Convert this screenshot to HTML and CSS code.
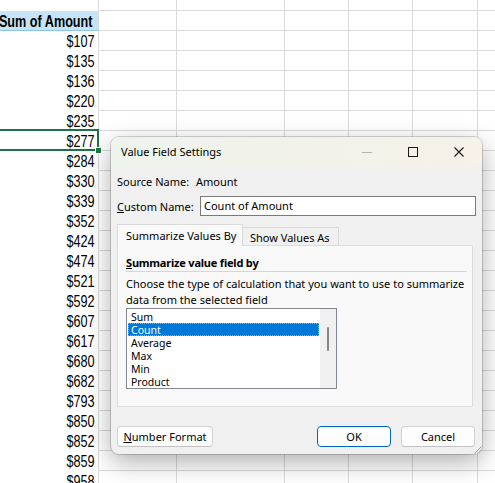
FILE: index.html
```html
<!DOCTYPE html>
<html>
<head>
<meta charset="utf-8">
<link rel="stylesheet" href="styles.css">
</head>
<body>
<div class="sheet">
  <div class="a top"></div><div></div><div></div><div></div><div></div><div></div><div></div>
  <div class="a hdr"><span>Sum of Amount</span></div><div></div><div></div><div></div><div></div><div></div><div></div>
  <div class="a"><span>$107</span></div><div></div><div></div><div></div><div></div><div></div><div></div>
  <div class="a"><span>$135</span></div><div></div><div></div><div></div><div></div><div></div><div></div>
  <div class="a"><span>$136</span></div><div></div><div></div><div></div><div></div><div></div><div></div>
  <div class="a"><span>$220</span></div><div></div><div></div><div></div><div></div><div></div><div></div>
  <div class="a"><span>$235</span></div><div></div><div></div><div></div><div></div><div></div><div></div>
  <div class="a sel"><span>$277</span></div><div></div><div></div><div></div><div></div><div></div><div></div>
  <div class="a"><span>$284</span></div><div></div><div></div><div></div><div></div><div></div><div></div>
  <div class="a"><span>$330</span></div><div></div><div></div><div></div><div></div><div></div><div></div>
  <div class="a"><span>$339</span></div><div></div><div></div><div></div><div></div><div></div><div></div>
  <div class="a"><span>$352</span></div><div></div><div></div><div></div><div></div><div></div><div></div>
  <div class="a"><span>$424</span></div><div></div><div></div><div></div><div></div><div></div><div></div>
  <div class="a"><span>$474</span></div><div></div><div></div><div></div><div></div><div></div><div></div>
  <div class="a"><span>$521</span></div><div></div><div></div><div></div><div></div><div></div><div></div>
  <div class="a"><span>$592</span></div><div></div><div></div><div></div><div></div><div></div><div></div>
  <div class="a"><span>$607</span></div><div></div><div></div><div></div><div></div><div></div><div></div>
  <div class="a"><span>$617</span></div><div></div><div></div><div></div><div></div><div></div><div></div>
  <div class="a"><span>$680</span></div><div></div><div></div><div></div><div></div><div></div><div></div>
  <div class="a"><span>$682</span></div><div></div><div></div><div></div><div></div><div></div><div></div>
  <div class="a"><span>$793</span></div><div></div><div></div><div></div><div></div><div></div><div></div>
  <div class="a"><span>$850</span></div><div></div><div></div><div></div><div></div><div></div><div></div>
  <div class="a"><span>$852</span></div><div></div><div></div><div></div><div></div><div></div><div></div>
  <div class="a"><span>$859</span></div><div></div><div></div><div></div><div></div><div></div><div></div>
  <div class="a"><span>$958</span></div><div></div><div></div><div></div><div></div><div></div><div></div>
</div>

<div class="dialog">
  <div class="titlebar">
    <span class="title">Value Field Settings</span>
    <div class="ctrls">
      <span class="ctl"><svg width="12" height="12" viewBox="0 0 12 12"><path d="M1 6.5h10" stroke="#b4b4b4" stroke-width="1"/></svg></span>
      <span class="ctl"><svg width="12" height="12" viewBox="0 0 12 12"><rect x="1.5" y="1.5" width="9" height="9" fill="none" stroke="#1a1a1a" stroke-width="1"/></svg></span>
      <span class="ctl"><svg width="12" height="12" viewBox="0 0 12 12"><path d="M1.5 1.5l9 9M10.5 1.5l-9 9" stroke="#1a1a1a" stroke-width="1.1"/></svg></span>
    </div>
  </div>
  <div class="dbody">
    <div class="row src"><span class="lbl">Source Name:</span><span>Amount</span></div>
    <div class="row cust"><span class="lbl2"><u>C</u>ustom Name:</span><div class="input">Count of Amount</div></div>
    <div class="tabs">
      <div class="tab active">Summarize Values By</div>
      <div class="tab">Show Values As</div>
    </div>
    <div class="panel">
      <div class="heading"><u>S</u>ummarize value field by</div>
      <p class="desc">Choose the type of calculation that you want to use to summarize<br>data from the selected field</p>
      <div class="listbox">
        <ul class="items">
          <li>Sum</li>
          <li class="chosen">Count</li>
          <li>Average</li>
          <li>Max</li>
          <li>Min</li>
          <li>Product</li>
        </ul>
        <div class="scroll"><div class="thumb"></div></div>
      </div>
    </div>
    <div class="buttons">
      <button class="btn nf"><u>N</u>umber Format</button>
      <span class="spacer"></span>
      <button class="btn ok">OK</button>
      <button class="btn cancel">Cancel</button>
    </div>
  </div>
  <svg class="grip" width="11" height="11" viewBox="0 0 11 11"><path d="M10.5 3.5l-7 7M10.5 7l-3.5 3.5" stroke="#9a9a9a" stroke-width="1"/></svg>
</div>
</body>
</html>
```

FILE: styles.css
```css
html, body {
  margin: 0;
  padding: 0;
  width: 495px;
  height: 483px;
  overflow: hidden;
  background: #ffffff;
}

.sheet {
  display: grid;
  grid-template-columns: 99px 78px 108px 64px 64px 65px 60px;
  grid-template-rows: 11px repeat(24, 20px);
  font-family: "Liberation Sans", Arial, sans-serif;
  font-size: 16px;
  color: #000;
}

.sheet > div {
  box-sizing: border-box;
  border-right: 1px solid #dadada;
  border-bottom: 1px solid #dadada;
}

.sheet > .a {
  border-bottom-color: #ffffff;
  display: flex;
  justify-content: flex-end;
  padding-right: 3px;
  line-height: 21px;
  white-space: nowrap;
  position: relative;
}

.sheet > .a > span {
  display: inline-block;
  flex: none;
  transform: scaleX(0.79);
  transform-origin: 100% 50%;
}

.sheet > .a.top {
  border-bottom-color: transparent;
}

.sheet > .a.hdr {
  background: #c6e4f8;
  border-bottom-color: #8fc4ea;
  font-weight: bold;
  padding-right: 6px;
}

.sheet > .a.sel::after {
  content: "";
  position: absolute;
  left: -3px;
  top: -2px;
  right: -1px;
  bottom: -1px;
  border: 2px solid #1e7145;
}

.sheet > .a.sel::before {
  content: "";
  position: absolute;
  left: 95px;
  top: 16px;
  width: 7px;
  height: 7px;
  box-sizing: border-box;
  background: #1e7145;
  border: 1px solid #ffffff;
  z-index: 2;
}

/* Dialog */
.dialog {
  position: absolute;
  left: 111px;
  top: 137px;
  width: 371px;
  height: 317px;
  border-radius: 8px;
  background: #f0f0f0;
  box-shadow: 0 0 0 1px rgba(0,0,0,0.16), 0 8px 26px rgba(0,0,0,0.32);
  font-family: "Noto Sans", "Liberation Sans", sans-serif;
  font-size: 11px;
  color: #000;
  white-space: nowrap;
  overflow: hidden;
}

.titlebar {
  height: 30px;
  display: flex;
  align-items: center;
  background: linear-gradient(90deg, #edf4ec 0%, #f2f2ea 50%, #f7f1e8 100%);
  padding-left: 10px;
  font-size: 11px;
}

.title {
  flex: 1;
  line-height: 16px;
}

.ctrls {
  display: flex;
  height: 30px;
}

.ctl {
  width: 46px;
  height: 30px;
  display: flex;
  align-items: center;
  justify-content: center;
}

.dbody {
  display: flex;
  flex-direction: column;
  padding: 7px 7px 0 6px;
}

.row {
  display: flex;
  align-items: center;
}

.src {
  line-height: 16px;
}

.lbl {
  width: 79px;
}

.cust {
  margin-top: 6px;
  height: 20px;
}

.lbl2 {
  width: 83px;
}

.input {
  flex: 1;
  height: 20px;
  box-sizing: border-box;
  border: 1px solid #7a7a7a;
  background: #ffffff;
  padding-left: 3px;
  line-height: 17px;
  margin-right: -1px;
}

.tabs {
  display: flex;
  align-items: flex-end;
  margin-top: 8px;
  height: 21px;
  position: relative;
  z-index: 1;
}

.tab {
  box-sizing: border-box;
  border: 1px solid #d9d9d9;
  border-bottom: none;
  background: #f0f0f0;
  height: 18px;
  padding: 0 7px;
  line-height: 19px;
}

.tab.active {
  background: #f9f9f9;
  height: 22px;
  margin-bottom: -1px;
  padding: 0 8px;
  line-height: 22px;
  width: 126px;
}

.tab + .tab {
  border-left: none;
  width: 96px;
}

.panel {
  box-sizing: border-box;
  height: 162px;
  border: 1px solid #dcdcdc;
  background: #f9f9f9;
  padding: 9px 5px 0 8px;
  margin-right: 2px;
}

.heading {
  font-weight: bold;
  line-height: 16px;
  letter-spacing: -0.2px;
  border-bottom: 1px solid #d6d6d6;
}

.desc {
  margin: 4px 0 0 0;
  line-height: 16px;
}

.listbox {
  width: 211px;
  height: 81px;
  box-sizing: border-box;
  border: 1px solid #828790;
  background: #ffffff;
  display: flex;
}

.items {
  list-style: none;
  margin: 0;
  padding: 1px 0 0 1px;
  flex: 1;
}

.items li {
  height: 13px;
  line-height: 14px;
  padding-left: 3px;
  font-size: 10.5px;
}

.items li.chosen {
  background: #0078d7;
  color: #ffffff;
  outline: 1px dotted #f59a36;
  outline-offset: -1px;
  margin-right: 1px;
}

.scroll {
  width: 16px;
  background: #f0f0f0;
  position: relative;
}

.thumb {
  position: absolute;
  left: 7px;
  top: 18px;
  width: 2px;
  height: 24px;
  border-radius: 1px;
  background: #858585;
}

.buttons {
  display: flex;
  margin-top: 19px;
  height: 21px;
}

.spacer {
  flex: 1;
}

.btn {
  font-family: inherit;
  font-size: 11px;
  color: #000;
  box-sizing: border-box;
  height: 21px;
  padding: 0;
  border: 1px solid #d2d2d2;
  border-bottom-color: #c2c2c2;
  border-radius: 4px;
  background: #fdfdfd;
  line-height: 17px;
}

.nf {
  width: 96px;
}

.ok {
  width: 74px;
  border: 1px solid #0067c0;
}

.cancel {
  width: 74px;
  margin-left: 10px;
}

.grip {
  position: absolute;
  right: 0;
  bottom: 0;
}
```
